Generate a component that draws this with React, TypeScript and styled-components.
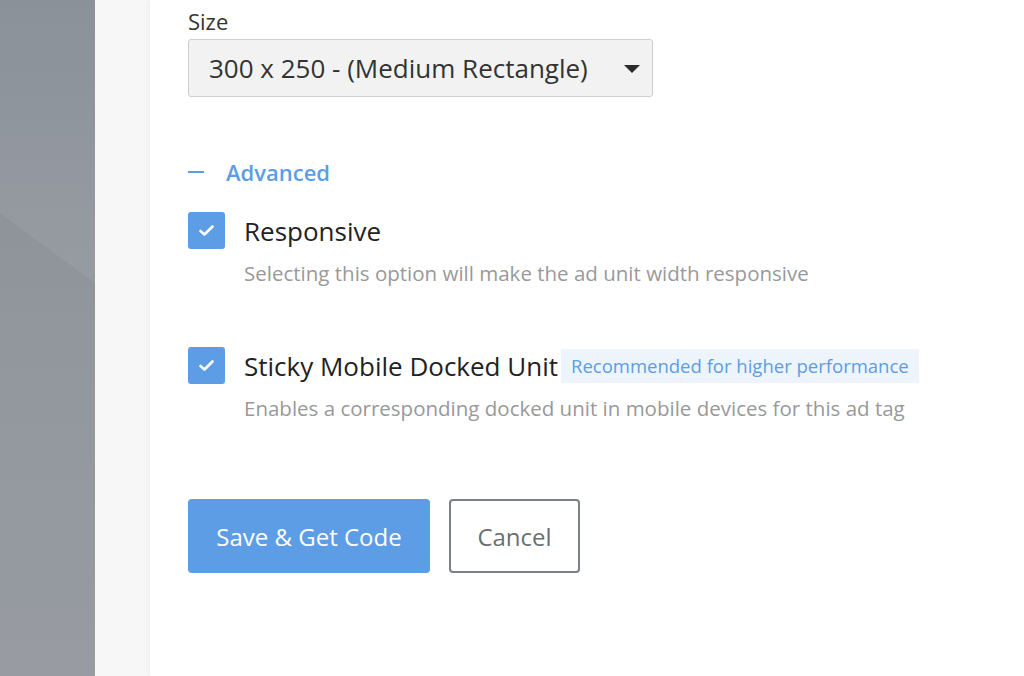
import styled, { createGlobalStyle } from "styled-components"

const GlobalStyle = createGlobalStyle`
    html, body {
        margin: 0;
        padding: 0;
        height: 100%;
        background: #ffffff;
        font-family: "Open Sans", "Noto Sans", sans-serif;
        overflow: hidden;
    }
    #root {
        height: 100%;
    }
`

const blue = "#5c9de6"

const Page = styled.div`
    display: flex;
    height: 676px;
    width: 1024px;
`

const SidePanel = styled.div`
    position: relative;
    width: 95px;
    flex-shrink: 0;
    background: linear-gradient(to bottom, #8a9199 0%, #969ba2 38%, #9b9fa5 100%);

    &::after {
        content: "";
        position: absolute;
        inset: 0;
        background: linear-gradient(to bottom, rgba(0, 0, 0, 0.05), rgba(0, 0, 0, 0.02));
        clip-path: polygon(0 213px, 95px 283px, 95px 100%, 0 100%);
    }
`

const Gutter = styled.div`
    width: 55px;
    flex-shrink: 0;
    background: #f7f7f7;
`

const Content = styled.div`
    flex: 1;
    background: #ffffff;
    box-shadow: -2px 0 4px rgba(0, 0, 0, 0.04);
    padding: 6px 0 0 38px;
    display: flex;
    flex-direction: column;
`

const FieldLabel = styled.label`
    font-size: 22px;
    color: #333;
    line-height: 30px;
    margin-bottom: 3px;
`

const SelectBox = styled.div`
    width: 465px;
    height: 58px;
    box-sizing: border-box;
    background: #f2f2f2;
    border: 1px solid #cfcfcf;
    border-radius: 3px;
    display: flex;
    align-items: center;
    justify-content: space-between;
    padding: 0 12px 0 20px;
    font-size: 26px;
    color: #333;
`

const Caret = styled.span`
    width: 0;
    height: 0;
    border-left: 8px solid transparent;
    border-right: 8px solid transparent;
    border-top: 8px solid #2b2b2b;
    margin-top: 2px;
`

const AdvancedToggle = styled.div`
    display: flex;
    align-items: center;
    margin-top: 60px;
    color: ${blue};
    font-size: 22px;
    font-weight: 600;
    line-height: 30px;
`

const Dash = styled.span`
    width: 16px;
    height: 2px;
    background: ${blue};
    margin-right: 22px;
`

const Option = styled.div<{ $gap: number }>`
    display: grid;
    grid-template-columns: 37px 1fr;
    column-gap: 19px;
    margin-top: ${p => p.$gap}px;
`

const Check = styled.div`
    width: 37px;
    height: 37px;
    border-radius: 3px;
    background: ${blue};
    display: flex;
    align-items: center;
    justify-content: center;
`

const OptionTitle = styled.div`
    display: flex;
    align-items: center;
    height: 37px;
    font-size: 26px;
    color: #222;
    white-space: nowrap;
`

const Badge = styled.span`
    margin-left: 3px;
    background: #eef4fb;
    color: ${blue};
    font-size: 18.5px;
    padding: 0 10px;
    height: 34px;
    display: inline-flex;
    align-items: center;
`

const OptionHelp = styled.div`
    grid-column: 2;
    font-size: 20.5px;
    line-height: 28px;
    color: #999;
    margin-top: 10px;
    white-space: nowrap;
`

const Actions = styled.div`
    display: flex;
    gap: 19px;
    margin-top: 77px;
`

const Button = styled.button<{ $primary?: boolean }>`
    height: 74px;
    box-sizing: border-box;
    border-radius: 4px;
    font-family: inherit;
    font-size: 24px;
    padding: 0;
    white-space: nowrap;
    cursor: pointer;
    background: ${p => (p.$primary ? blue : "#fff")};
    color: ${p => (p.$primary ? "#fff" : "#6b6f73")};
    border: ${p => (p.$primary ? "none" : "2px solid #7c8085")};
    width: ${p => (p.$primary ? "242px" : "131px")};
`

const CheckIcon = () => (
    <svg width="17" height="13" viewBox="0 0 17 13">
        <path d="M2.5 7 L6.5 10.5 L14.5 2.5" fill="none" stroke="#fff" strokeWidth="2.6" strokeLinecap="round" strokeLinejoin="round" />
    </svg>
)

const App = () => {
    return (
        <Page>
            <GlobalStyle />
            <SidePanel />
            <Gutter />
            <Content>
                <FieldLabel>Size</FieldLabel>
                <SelectBox>
                    300 x 250 - (Medium Rectangle)
                    <Caret />
                </SelectBox>
                <AdvancedToggle>
                    <Dash />
                    Advanced
                </AdvancedToggle>
                <Option $gap={25}>
                    <Check><CheckIcon /></Check>
                    <OptionTitle>Responsive</OptionTitle>
                    <OptionHelp>Selecting this option will make the ad unit width responsive</OptionHelp>
                </Option>
                <Option $gap={60}>
                    <Check><CheckIcon /></Check>
                    <OptionTitle>
                        Sticky Mobile Docked Unit
                        <Badge>Recommended for higher performance</Badge>
                    </OptionTitle>
                    <OptionHelp>Enables a corresponding docked unit in mobile devices for this ad tag</OptionHelp>
                </Option>
                <Actions>
                    <Button $primary>Save &amp; Get Code</Button>
                    <Button>Cancel</Button>
                </Actions>
            </Content>
        </Page>
    )
}

export default App
